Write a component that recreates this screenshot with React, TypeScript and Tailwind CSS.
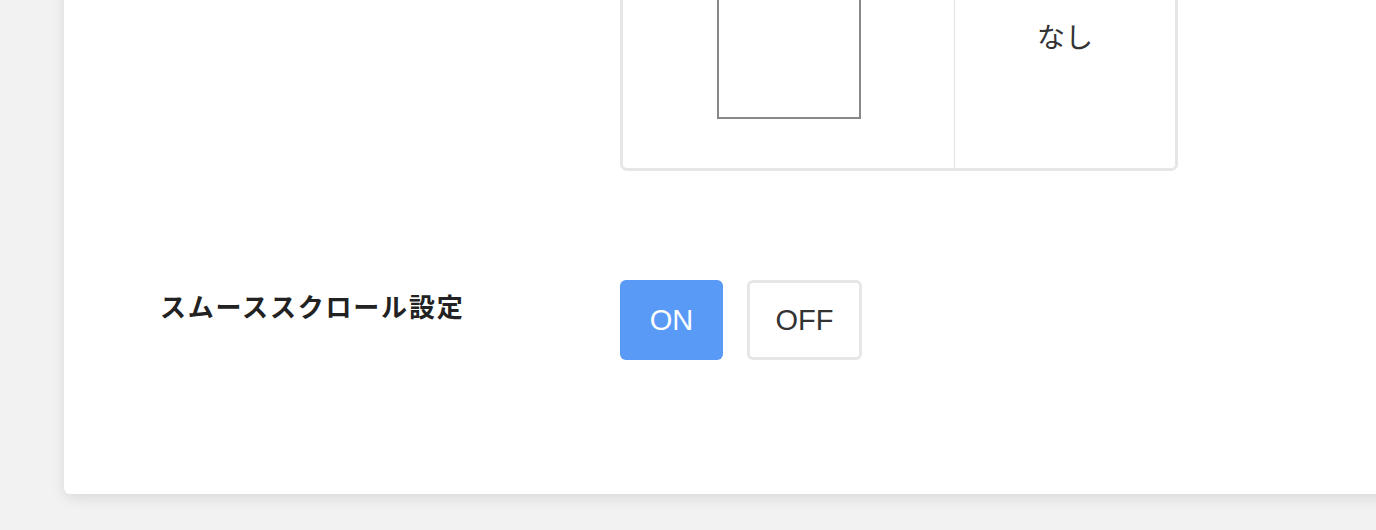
import React from "react";

export default function App() {
  return (
    <div
      className="w-[1376px] h-[530px] overflow-hidden bg-[#f2f2f2]"
      style={{ fontFamily: '"Liberation Sans", "Noto Sans CJK JP", sans-serif' }}
    >
      <div className="pl-16">
        <div className="-mt-[163px] w-[1400px] bg-white rounded-b-[6px] shadow-[0_4px_14px_rgba(0,0,0,0.10)] pt-10 pb-[134px] pl-[97px]">
          {/* table row */}
          <div className="flex">
            <div className="w-[459px] shrink-0" />
            <div className="flex w-[558px] border-[3px] border-[#e6e6e6] rounded-[7px]">
              <div className="w-[332px] border-r border-[#e2e2e2] flex justify-center pt-[49px] pb-[49px]">
                <div className="w-[144px] h-[190px] border-2 border-[#888888]" />
              </div>
              <div className="flex-1 flex justify-center pt-[139px]">
                <span className="text-[28px] leading-[40px] text-[#333333]">なし</span>
              </div>
            </div>
          </div>
          {/* smooth scroll row */}
          <div className="flex mt-[109px]">
            <div className="w-[459px] shrink-0 pt-[10px] -ml-[1px]">
              <span className="text-[26px] leading-[36px] font-bold tracking-[1.8px] text-[#222222]">
                スムーススクロール設定
              </span>
            </div>
            <div className="flex gap-[24px] ml-[1px]">
              <button className="h-[80px] w-[103px] rounded-[6px] bg-[#599af7] text-white text-[29px] flex items-center justify-center pt-[2px]">
                ON
              </button>
              <button className="h-[80px] w-[115px] rounded-[6px] border-[3px] border-[#e6e6e6] bg-white text-[#333333] text-[29px] flex items-center justify-center pt-[2px]">
                OFF
              </button>
            </div>
          </div>
        </div>
      </div>
    </div>
  );
}
